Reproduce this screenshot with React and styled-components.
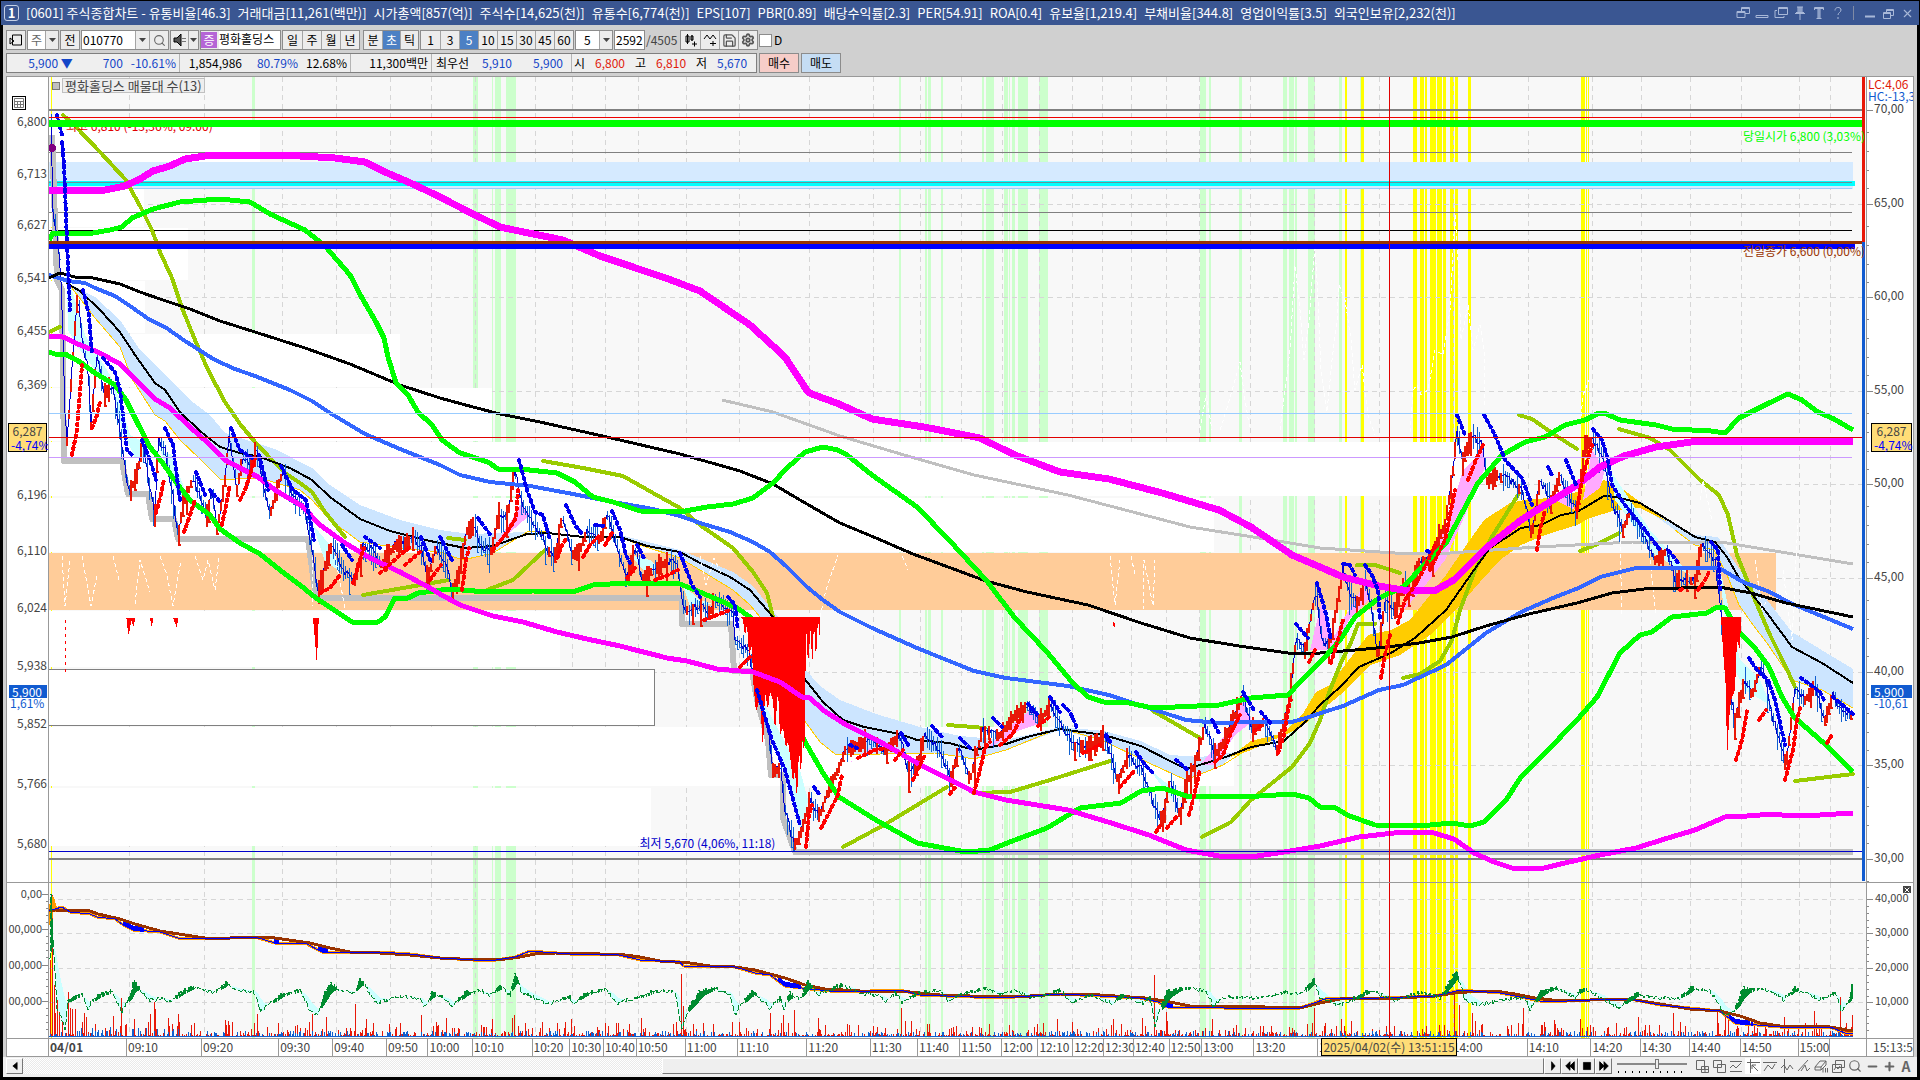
import React from 'react';
import styled, { createGlobalStyle } from 'styled-components';
import { Search, Save, Settings, Minus, Plus, X } from 'lucide-react';

// --- GLOBAL ---

const GlobalStyle = createGlobalStyle`
  * { box-sizing: border-box; }
  body { margin: 0; background: #000; }
  body, button, input, select {
    font-family: "Liberation Sans Narrow", "Noto Sans CJK KR", sans-serif;
    font-size: 12px;
    line-height: 16px;
  }
`;

// --- WINDOW ---

const Shell = styled.div`
  display: flex;
  flex-direction: column;
  height: 100vh;
  min-width: 1000px;
  padding: 1px 0 3px;
  background: #000;
  overflow: hidden;
`;

const TitleBar = styled.header`
  display: flex;
  align-items: center;
  justify-content: space-between;
  height: 24px;
  flex: none;
  margin: 0 1px;
  padding: 0 4px 0 3px;
  background: #3a5692;
  color: #fff;
`;

const TitleText = styled.h1`
  display: flex;
  align-items: center;
  gap: 7px;
  margin: 0;
  font-size: 13px;
  font-weight: 400;
  white-space: nowrap;
`;

const TitleBadge = styled.span`
  width: 15px;
  height: 16px;
  border: 1px solid #c6d0e6;
  border-radius: 3px;
  font-weight: 700;
  line-height: 14px;
  text-align: center;
`;

const TitleTools = styled.div`
  display: flex;
  align-items: center;
  gap: 4px;
`;

const TitleButton = styled.button`
  display: flex;
  align-items: center;
  justify-content: center;
  width: 15px;
  height: 18px;
  padding: 0;
  border: 0;
  background: none;
  color: #a9b8d8;
`;

const TitleDivider = styled.span`
  width: 1px;
  height: 14px;
  margin: 0 4px;
  background: #7f8aa5;
`;

const Body = styled.main`
  display: flex;
  flex-direction: column;
  flex: 1;
  min-height: 0;
  margin: 0 3px;
  padding: 5px 3px 0;
  background: #d0d0d0;
`;

// --- TOOLBAR ---

const ToolRow = styled.div`
  display: flex;
  align-items: stretch;
  gap: ${props => props.$gap || 1}px;
  height: 20px;
  flex: none;
  margin-bottom: 3px;
`;

const Group = styled.div`
  display: flex;
  border: 1px solid #8c8c8c;
  background: #ececec;
  margin-right: ${props => props.$after || 0}px;
`;

const ToolButton = styled.button`
  display: flex;
  align-items: center;
  justify-content: center;
  width: ${props => props.$w || 19}px;
  padding: 0;
  border: 0;
  border-left: 1px solid #a4a4a4;
  background: ${props => (props.$active ? '#4c80c4' : '#ececec')};
  color: ${props => (props.$active ? '#fff' : '#000')};
  white-space: nowrap;

  &:first-child { border-left: 0; }
`;

const Combo = styled.select`
  appearance: none;
  width: ${props => props.$w}px;
  padding: 0 0 0 ${props => props.$pad || 3}px;
  border: 0;
  border-radius: 0;
  background: #fff;
  color: ${props => props.$color || '#000'};
`;

const Field = styled.input`
  width: ${props => props.$w}px;
  padding: 0 1px;
  border: 0;
  background: #fff;
`;

const MarketTag = styled.span`
  width: 16px;
  margin: 1px 2px 1px 0;
  background: #b565d6;
  color: #fff;
  text-align: center;
`;

const StockName = styled.span`
  width: 61px;
  background: #fff;
  white-space: nowrap;
`;

const TotalCount = styled.span`
  width: 33px;
  line-height: 20px;
  color: #444;
`;

const CheckLabel = styled.label`
  display: flex;
  align-items: center;
  gap: 2px;

  input {
    appearance: none;
    width: 13px;
    height: 13px;
    margin: 0;
    border: 1px solid #8c8c8c;
    background: #fff;
  }
`;

const QuoteBox = styled.div`
  display: flex;
  width: 751px;
  border: 1px solid #7f7f7f;
  background: #efefef;
  line-height: 18px;
`;

const QuoteCell = styled.div`
  display: flex;
  justify-content: flex-end;
  gap: 8px;
  width: ${props => props.$w}px;
  padding-right: ${props => props.$pad || 3}px;
  border-right: 1px solid #b4b4b4;
  white-space: nowrap;

  &:last-child {
    justify-content: flex-start;
    gap: 10px;
    padding-left: 2px;
    border-right: 0;
  }
`;

const Value = styled.span`
  color: ${props => props.$color || '#000'};
  min-width: ${props => props.$w || 0}px;
  text-align: right;
`;

const OrderButton = styled.button`
  width: 40px;
  padding: 0;
  border: 1px solid #8c8c8c;
  background: ${props => props.$bg};
`;

// --- CHART FRAME ---

const ChartFrame = styled.section`
  display: grid;
  grid-template-columns: 42px minmax(0, 1fr) 47px;
  grid-template-rows: minmax(0, 805fr) minmax(0, 156fr) 18px;
  flex: 1;
  min-height: 0;
  border: 1px solid #999;
  background: #fff;
`;

const AxisCell = styled.div`
  position: relative;
  overflow: hidden;
  min-height: 0;
  border-top: ${props => (props.$lower ? '1px solid #999' : 0)};
  border-left: ${props => (props.$right ? '1px solid #999' : 0)};
  border-right: ${props => (props.$right ? 0 : '1px solid #999')};
`;

const PlotCell = styled.div`
  position: relative;
  overflow: hidden;
  min-height: 0;
  background: #f8f8f8;
  border-top: ${props => (props.$lower ? '1px solid #999' : 0)};
`;

const Canvas = styled.svg`
  display: block;
  width: 100%;
  height: 100%;

  text { font-size: ${props => props.$text || 12}px; fill: #444; }
  text.high { fill: #e00000; }
`;

const Legend = styled.div`
  position: absolute;
  top: 1px;
  left: 3px;
  display: flex;
  align-items: center;
  gap: 2px;
  font-size: 13px;

  &::before {
    content: "";
    width: 6px;
    height: 6px;
    border: 1px solid #777;
    background: #c0c0c0;
  }

  span {
    height: 15px;
    padding: 0 2px;
    border: 1px solid #c0c0c0;
    background: #eeeeee;
    color: #444;
    line-height: 13px;
  }
`;

const Note = styled.span`
  position: absolute;
  top: ${props => props.$top};
  left: ${props => props.$left || 'auto'};
  right: ${props => props.$right || 'auto'};
  color: ${props => props.$color};
  white-space: pre;
`;

const Tag = styled.div`
  position: absolute;
  top: ${props => props.$top};
  left: ${props => (props.$left || 4)}px;
  right: 1px;
  padding: 0 2px;
  border: 1px solid ${props => (props.$last ? '#115bd0' : '#000')};
  background: ${props => (props.$last ? '#115bd0' : '#ffdd77')};
  color: ${props => (props.$last ? '#fff' : '#444')};
  line-height: ${props => (props.$last ? 11 : 14)}px;
  text-align: ${props => (props.$last ? 'left' : 'center')};
  white-space: nowrap;

  em { display: block; font-style: normal; color: #00f; line-height: 13px; }
`;

const AxisNote = styled.span`
  position: absolute;
  top: ${props => props.$top};
  left: ${props => props.$left}px;
  color: ${props => props.$color};
  line-height: 12px;
  white-space: nowrap;
`;

const GridButton = styled.button`
  position: absolute;
  top: 19px;
  left: 5px;
  width: 14px;
  height: 14px;
  padding: 1px;
  border: 1px solid #000;
  background: #fff;

  svg { display: block; }
`;

const CloseButton = styled.button`
  position: absolute;
  top: 3px;
  right: 2px;
  display: flex;
  width: 8px;
  height: 7px;
  padding: 0;
  border: 0;
  background: #444;
  color: #fff;
`;

const TimeAxis = styled.div`
  position: relative;
  display: flex;
  grid-column: 2;
  border-top: 1px solid #999;
  color: #444;
`;

const TimeCorner = styled.div`
  border-top: 1px solid #999;
  border-left: ${props => (props.$right ? '1px solid #999' : 0)};
  border-right: ${props => (props.$right ? 0 : '1px solid #999')};
  padding-left: ${props => (props.$right ? 6 : 0)}px;
  color: #444;
  line-height: 15px;
  white-space: nowrap;
  overflow: hidden;
`;

const TimeCell = styled.span`
  flex: ${props => props.$span} 1 0;
  min-width: 0;
  padding-left: 1px;
  border-left: 1px solid #999;
  line-height: 15px;
  white-space: nowrap;

  &:first-child { border-left: 0; font-weight: 700; }
`;

const CursorTime = styled.span`
  position: absolute;
  top: -1px;
  right: 409px;
  width: 136px;
  height: 18px;
  border: 1px solid #000;
  background: #ffdd77;
  line-height: 15px;
  text-align: center;
  white-space: nowrap;
`;

// --- BOTTOM BAR ---

const BottomBar = styled.footer`
  display: flex;
  height: 20px;
  flex: none;
  margin: 0 -3px;
  padding: 1px 3px 3px;
  background: #efefef;
`;

const ScrollButton = styled.button`
  display: flex;
  align-items: center;
  justify-content: center;
  width: 17px;
  padding: 0;
  border: 1px solid;
  border-color: #fff #777 #777 #fff;
  background: #efefef;
`;

const ScrollTrack = styled.div`
  display: flex;
  flex: 1;
  justify-content: flex-end;
  background: repeating-conic-gradient(#fff 0 25%, #eaeaea 0 50%) 0 0 / 2px 2px;
`;

const ScrollThumb = styled.div`
  width: 58%;
  border: 1px solid;
  border-color: #fff #777 #777 #fff;
  background: #efefef;
`;

const Zoom = styled.input`
  appearance: none;
  width: 70px;
  height: 15px;
  margin: 0 7px 0 5px;
  background:
    linear-gradient(#888, #888) 0 5px / 100% 2px no-repeat,
    repeating-linear-gradient(90deg, #000 0 1px, transparent 1px 7px) 1px 13px / 100% 2px no-repeat;

  &::-webkit-slider-thumb {
    appearance: none;
    width: 4px;
    height: 10px;
    margin-top: -4px;
    border: 1px solid #777;
    background: #eee;
  }
`;

const DrawTools = styled.div`
  display: flex;
  align-items: center;
  gap: 1px;
`;

const DrawButton = styled.button`
  display: flex;
  align-items: center;
  justify-content: center;
  width: 16px;
  height: 16px;
  padding: 0;
  border: 0;
  background: ${props => (props.$on ? '#fff' : 'none')};
  color: #666;
  font-size: 14px;
  font-weight: 700;
`;

// --- CHART DATA ---

const GRID_X = [129, 204, 282, 336, 390, 431, 475, 535, 572, 605, 638, 686, 739, 809, 873, 920, 961, 1002, 1039, 1072, 1102, 1131, 1166, 1199, 1250, 1314, 1379, 1453, 1528, 1592, 1641, 1690, 1741, 1799, 1830];
const GRID_Y = [110, 204, 297, 391, 484, 578, 672, 765, 859];
const LOWER_GRID_Y = [899, 933, 968, 1002];

const TIMES = [
  [49, '04/01'], [128, '09:10'], [204, '09:20'], [282, '09:30'], [336, '09:40'], [390, '09:50'], [431, '10:00'],
  [475, '10:10'], [535, '10:20'], [572, '10:30'], [605, '10:40'], [637, '10:50'], [686, '11:00'], [738, '11:10'],
  [808, '11:20'], [872, '11:30'], [919, '11:40'], [961, '11:50'], [1002, '12:00'], [1038, '12:10'], [1072, '12:20'],
  [1102, '12:30'], [1131, '12:40'], [1166, '12:50'], [1198, '13:00'], [1250, '13:20'], [1314, '1'], [1451, '14:00'],
  [1528, '14:10'], [1592, '14:20'], [1641, '14:30'], [1690, '14:40'], [1741, '14:50'], [1799, '15:00'], [1830, ''],
];

const LEFT_TICKS = [['6,800', 122], ['6,713', 174], ['6,627', 225], ['6,541', 278], ['6,455', 331], ['6,369', 385], ['6,196', 495], ['6,110', 551], ['6,024', 608], ['5,938', 666], ['5,852', 724], ['5,766', 784], ['5,680', 844]];
const RIGHT_TICKS = [['70,00', 109], ['65,00', 203], ['60,00', 296], ['55,00', 390], ['50,00', 483], ['45,00', 577], ['40,00', 671], ['35,00', 764], ['30,00', 858]];

// [from, to] of the signal stripes
const GREEN_BANDS = [[252, 255], [473, 478], [492, 493], [495, 501], [506, 516], [899, 901], [925, 927], [928, 931], [941, 943], [982, 984], [986, 994], [1004, 1008], [1009, 1010], [1012, 1015], [1018, 1028], [1039, 1048], [1200, 1206], [1209, 1211], [1239, 1242], [1283, 1287], [1289, 1294], [1295, 1297], [1308, 1315], [1339, 1342], [1360, 1361]];
const YELLOW_BANDS = [[51, 52], [1345, 1347], [1361, 1364], [1413, 1417], [1420, 1424], [1425, 1427], [1430, 1436], [1437, 1442], [1443, 1446], [1450, 1454], [1455, 1458], [1468, 1471], [1581, 1585], [1586, 1587], [1588, 1589]];

// volume by price: top, bottom, right edge
const PROFILE = [[124, 174, 260], [175, 227, 144], [228, 280, 188], [281, 333, 145], [334, 387, 400], [388, 441, 492], [442, 496, 1479], [498, 552, 1214], [611, 667, 560], [727, 786, 1234], [788, 846, 651]];

const MAGENTA_UP = '49,190 85,191 105,190 125,186 140,179 153,171 170,166 185,159 205,156 225,155 265,155 300,156 335,158 365,162 385,172 415,185 440,197 471,213 500,227 514,230 563,240 600,256 630,266 671,280 700,291 725,308 750,325 785,357 808,392 812,394 839,404 872,419 924,427 980,438 1015,455 1060,472 1109,479 1162,493 1219,510 1251,527 1292,555 1320,567 1343,577 1379,586 1403,590 1434,591 1454,580 1486,548 1521,520 1545,505 1577,485 1600,467 1624,456 1656,447 1691,442 1727,441 1853,441';
const MAGENTA_LOW = '49,336 63,337 80,345 98,352 120,364 140,384 155,399 170,408 190,427 208,443 225,460 240,468 258,477 275,490 302,506 320,525 345,543 370,558 400,572 430,588 440,594 460,605 493,616 523,622 557,632 587,639 620,646 667,658 687,661 717,669 753,672 780,682 802,697 810,698 823,710 843,723 884,744 917,763 974,792 1006,800 1068,810 1108,822 1149,835 1186,850 1219,856 1251,857 1284,852 1320,846 1359,837 1403,832 1434,833 1454,839 1474,853 1494,862 1512,868 1540,869 1569,862 1600,855 1636,848 1668,838 1695,830 1725,817 1747,816 1774,814 1790,816 1820,815 1853,813';
const GREEN_UP = '49,240 53,233 93,233 110,230 122,227 132,218 153,209 180,202 220,199 250,202 270,214 305,230 325,246 350,275 362,298 376,322 384,338 388,357 396,383 408,395 418,412 432,425 442,440 460,453 488,462 498,469 520,469 557,473 575,482 593,497 613,502 640,511 680,512 707,507 733,504 753,498 773,483 787,468 805,452 823,447 838,450 847,455 872,475 917,507 949,540 986,580 1015,618 1047,652 1072,682 1088,697 1104,702 1129,703 1153,708 1219,705 1251,698 1288,695 1300,682 1324,658 1340,640 1355,617 1379,598 1403,587 1427,562 1446,543 1462,513 1478,483 1502,455 1525,442 1545,437 1565,425 1585,420 1599,413 1604,413 1620,420 1656,425 1672,429 1711,431 1725,433 1739,418 1767,404 1788,394 1802,400 1818,412 1834,419 1853,430';
const GREEN_LOW = '49,352 55,354 65,354 80,362 95,373 115,385 126,400 138,424 150,447 162,462 178,485 190,500 210,515 220,529 240,543 260,554 285,574 300,585 316,598 337,612 352,622 378,622 385,617 395,598 408,598 418,593 449,589 487,592 533,591 573,592 593,585 627,583 680,584 700,592 723,602 737,608 750,617 780,670 804,740 823,773 839,797 876,820 917,843 966,852 990,850 1015,840 1047,828 1080,808 1121,803 1141,791 1162,788 1190,797 1260,796 1292,794 1309,798 1320,807 1336,808 1347,815 1375,825 1419,826 1452,823 1470,826 1484,822 1506,800 1521,777 1545,753 1577,720 1597,697 1620,653 1640,635 1652,632 1672,617 1707,613 1717,607 1725,608 1739,632 1755,648 1769,667 1782,697 1794,717 1826,745 1853,772';
const BLACK_SLOW = '49,278 60,273 75,277 93,278 120,284 140,292 160,299 190,309 220,321 255,332 305,348 350,364 400,385 440,398 473,407 500,414 540,422 607,437 680,454 740,471 773,484 800,500 840,523 876,538 913,554 986,581 1027,592 1088,605 1141,623 1190,638 1239,646 1288,653 1320,653 1355,650 1387,647 1419,643 1452,637 1486,626 1529,614 1577,603 1612,593 1644,589 1719,587 1751,593 1786,603 1853,617';
const BLUE_MA = '49,275 68,281 85,283 95,288 115,296 130,306 150,320 165,327 185,341 215,360 235,369 255,376 290,390 312,401 330,413 365,434 400,449 440,465 460,475 490,482 530,486 573,494 613,502 653,509 680,516 700,523 730,532 753,542 770,552 787,567 807,587 823,600 840,612 872,628 917,648 974,671 1006,678 1068,686 1109,695 1149,708 1186,720 1219,723 1251,722 1292,722 1309,717 1324,712 1343,706 1379,690 1403,685 1446,665 1486,633 1521,612 1553,598 1581,587 1600,577 1636,568 1719,568 1743,582 1770,592 1790,603 1853,629';
const GRAY_MA = '722,400 773,412 840,436 904,455 974,475 1068,495 1190,527 1272,540 1320,548 1395,553 1450,553 1537,547 1632,542 1727,543 1763,549 1853,564';
const BLACK_FAST = '66,283 80,291 100,310 120,332 135,355 155,383 165,390 180,412 200,431 220,447 240,453 260,457 290,468 312,480 330,497 360,519 390,531 430,541 465,548 493,546 527,534 547,533 583,537 620,537 647,546 680,552 700,563 730,577 750,590 773,617 790,650 804,678 823,702 843,720 864,727 900,734 917,740 949,743 974,750 1006,744 1027,737 1060,729 1104,735 1141,746 1170,761 1186,769 1223,758 1251,747 1284,741 1304,723 1320,705 1340,687 1359,667 1391,653 1415,638 1446,610 1474,570 1490,548 1521,528 1541,525 1561,515 1577,512 1604,496 1616,497 1640,503 1668,520 1695,537 1715,542 1727,557 1739,578 1767,613 1792,647 1822,663 1853,683';
const SUPPORT = '52,135 57,280 62,290 64,461 122,461 128,494 148,494 152,519 174,519 178,539 308,539 316,598 682,598 682,624 731,624 734,671 752,671 757,700 768,740 771,775 783,775 783,818 790,838 795,852 1853,852';

const BLUE_CLOUDS = [
  '68,283 95,297 120,320 140,350 165,375 190,400 210,415 225,433 250,441 275,449 312,468 330,485 360,505 400,520 440,530 470,534 527,532 493,553 463,560 440,552 400,548 360,542 330,520 312,500 300,490 260,478 235,479 220,479 200,459 180,440 165,421 155,415 132,379 120,347 95,318 85,305',
  '620,535 680,550 700,558 733,572 753,586 778,617 760,617 750,605 733,590 710,576 680,558 640,545',
  '804,668 820,686 840,700 876,714 920,727 960,736 1006,740 1060,727 1104,731 1141,741 1170,755 1200,757 1235,752 1223,765 1186,780 1149,763 1104,741 1060,730 1006,750 974,759 935,753 880,754 835,754 820,742 804,720',
  '1640,505 1695,535 1718,537 1740,570 1767,600 1792,632 1853,669 1853,708 1822,690 1792,680 1767,643 1753,625 1739,605 1727,575 1714,550 1695,545 1675,530',
];
const GOLD_LINES = [
  '68,283 85,305 95,318 120,347 132,379 155,415 165,421 180,440 200,459 220,479 235,479 260,478 300,490 312,500 330,520 360,542 400,548 440,552 463,560 493,553 527,532 547,531',
  '620,537 640,545 680,558 710,576 733,590 750,605 760,617',
  '804,720 820,742 835,754 880,754 935,753 974,759 1006,750 1060,728 1104,741 1149,763 1186,780 1223,765 1251,747',
  '1675,530 1695,545 1714,550 1727,575 1739,605 1753,625 1767,643 1792,680 1822,690 1853,708',
];
const GOLD_CLOUD = '1230,757 1251,741 1284,733 1304,712 1316,692 1330,685 1345,665 1368,635 1391,630 1410,620 1446,575 1465,547 1484,520 1510,503 1530,499 1555,498 1577,492 1604,480 1620,487 1655,513 1668,522 1640,508 1616,510 1590,518 1577,525 1545,535 1521,545 1500,560 1480,582 1460,605 1430,635 1400,655 1370,665 1340,695 1300,728 1251,750';

const OLIVE = [
  '49,332 60,327',
  '63,115 77,128 100,152 125,179 140,206 152,230 160,252 172,278 182,308 195,340 208,370 225,402 240,424 255,442 270,458 285,473 300,483 312,492 325,512 345,537',
  '543,461 583,468 623,476 653,493 680,508 700,525 733,548 753,572 767,593 773,617',
  '363,595 449,580', '448,538 465,540', '487,590 513,580 545,550', '843,847 884,825 947,787', '974,793 1010,792 1050,780 1110,761',
  '948,725 985,728', '1153,711 1200,738', '1202,837 1231,822 1251,800 1292,767 1310,743 1320,720 1330,690 1340,665 1352,640 1358,624 1375,624',
  '1403,678 1420,674 1440,661 1452,640 1460,610 1475,570 1490,540 1518,495', '1519,415 1532,419 1555,435 1577,449', '1580,551 1600,543 1619,533',
  '1619,429 1650,438 1670,450 1700,480 1719,495 1728,515 1737,555 1755,600 1770,635 1785,665 1795,687', '1795,781 1853,774', '1357,565 1375,565 1400,573',
];

const PRICE = '51,117 53,215 58,240 62,300 66,455 70,400 74,340 78,290 82,340 88,370 91,425 97,355 104,395 112,385 120,430 126,475 130,493 138,470 143,440 150,490 155,515 158,440 165,450 172,490 178,535 183,505 193,478 200,495 207,515 212,490 217,530 225,480 229,435 237,490 243,455 250,465 257,450 262,480 270,515 277,490 283,470 293,495 305,510 314,560 318,595 325,565 332,545 343,570 355,580 363,545 372,550 382,565 395,545 405,543 415,537 422,550 428,580 436,545 448,570 452,595 460,565 467,530 475,525 480,545 492,550 498,515 508,515 514,470 516,475 520,500 530,520 542,535 547,550 556,555 562,515 572,555 580,550 587,530 600,540 607,515 617,545 627,578 636,548 642,580 652,570 670,560 677,565 682,600 687,610 700,605 710,612 715,600 733,610 735,640 748,650 757,690 768,730 773,770 781,770 785,810 790,830 795,845 800,835 810,800 820,815 828,790 840,765 845,750 870,740 885,750 900,735 908,770 917,765 925,735 940,750 952,780 958,745 970,780 982,730 1000,735 1015,715 1027,705 1040,720 1050,705 1062,725 1075,745 1090,748 1105,735 1118,780 1128,755 1142,770 1152,800 1162,820 1170,780 1180,815 1186,785 1196,760 1205,725 1215,755 1225,740 1243,695 1252,730 1265,720 1277,750 1290,695 1296,640 1305,650 1316,590 1322,640 1330,645 1343,570 1350,595 1358,605 1365,580 1372,610 1378,660 1385,600 1395,610 1405,580 1410,595 1420,560 1432,560 1437,540 1445,525 1452,480 1457,430 1462,460 1466,450 1472,435 1482,445 1487,480 1497,475 1510,480 1522,490 1532,535 1540,480 1552,500 1560,475 1568,495 1577,510 1585,445 1593,440 1603,455 1611,500 1623,530 1630,510 1640,530 1655,560 1667,550 1675,580 1695,580 1702,545 1715,560 1722,620 1728,680 1735,720 1745,680 1752,695 1762,660 1770,710 1780,740 1786,765 1795,690 1805,700 1815,685 1825,720 1833,695 1840,710 1851,715 1852,695';

const SAR_DOWN = ['57,115 62,135', '62,142 64,165 66,215 68,265 70,310', '83,290 89,315 92,355', '103,358 115,372 120,390 124,425 127,450 132,455', '142,440 150,460 156,480', '165,428 173,445 176,470 180,500', '196,472 205,495', '210,490 220,502', '231,428 240,450 252,458', '259,455 268,490', '281,466 293,490 306,500 314,540', '342,545 352,560', '365,537 380,548', '421,537 430,560', '440,537 452,560', '478,518 492,537', '519,460 527,490 535,512 543,515 550,540', '566,505 575,525 583,535', '595,525 605,526', '612,511 620,530 626,555 630,563', '637,545 645,560', '680,553 692,585 700,597', '728,597 735,605 738,630', '757,690 772,740 785,770 800,825', '814,787 820,795', '850,745 857,748', '901,733 910,748', '932,726 943,738', '960,738 972,750', '993,718 1002,727', '1028,704 1037,714', '1050,697 1060,712', '1063,705 1070,712 1077,728', '1106,735 1112,745', '1136,752 1145,765 1155,775', '1176,760 1188,770', '1212,720 1220,735', '1243,692 1255,712', '1261,712 1272,725', '1296,624 1308,638', '1317,583 1325,610 1331,640', '1343,564 1350,565 1355,575', '1365,565 1372,575 1378,590 1380,620', '1427,551 1432,553', '1457,415 1466,437', '1484,415 1495,435 1505,460 1522,478 1532,505', '1548,467 1553,477', '1566,460 1576,485', '1593,429 1602,440 1608,460 1612,485 1625,505 1645,530 1660,550', '1669,551 1680,565', '1711,542 1718,550 1720,590', '1749,658 1757,670 1768,680 1775,700 1785,745', '1801,678 1820,692 1825,702', '1833,697 1853,714'];
const SAR_UP = ['72,455 77,430 80,390 82,365', '92,428 97,415 100,402', '156,513 160,498 164,480', '184,532 190,515 195,500', '222,525 227,500 230,485', '240,500 245,490 250,475 256,455', '320,593 330,588 340,575', '353,583 360,560 364,548', '380,573 400,555 410,547', '405,565 420,552', '430,580 441,565', '462,590 466,560 469,548', '493,550 505,535 516,518 518,490', '557,558 562,545 567,538', '583,557 590,545 600,535', '605,545 612,533', '627,578 635,568', '655,580 668,575 678,570', '704,620 730,610', '740,667 752,655', '806,847 809,815 812,805', '821,828 828,815 838,795 842,775', '858,758 875,750 885,748', '895,760 903,750', '913,780 920,765 925,755', '950,794 957,785', '974,793 980,770 985,748 990,742', '1000,745 1012,735 1020,720', '1038,726 1048,718', '1083,753 1100,745', '1120,787 1135,770', '1156,832 1160,826', '1167,828 1178,815', '1189,815 1193,800 1200,770', '1215,762 1223,755 1230,735 1240,715', '1254,731 1262,725', '1278,753 1284,735 1290,700', '1309,662 1315,650', '1331,663 1338,640 1343,620', '1381,678 1386,650 1390,635', '1398,623 1405,600 1415,585 1425,567 1435,545', '1430,570 1445,540 1455,490', '1468,480 1475,462 1483,445', '1537,550 1540,530 1545,510', '1577,510 1583,475 1592,445', '1680,590 1685,588', '1698,590 1705,580 1710,570', '1736,760 1742,740 1747,710', '1759,720 1766,710', '1785,780 1793,750 1797,720 1800,708', '1827,743 1832,735'];

const CYAN_CLOUDS = ['66,260 72,290 85,335 95,350 110,375 120,400 130,435 140,440 150,455 135,458 122,430 112,385 95,370 80,350 68,330', '160,450 172,455 185,490 180,500', '313,525 330,545 342,572 325,562', '683,585 700,600 712,604 690,606', '757,690 800,770 808,800 802,835 780,760', '630,555 650,560 660,570 645,572', '1150,770 1175,790 1172,800', '1610,470 1650,530 1690,575 1655,555 1615,500', '1718,560 1740,660 1760,680 1785,740 1770,705 1745,690 1730,660'];
const PINK_CLOUDS = ['495,545 515,515 520,505 530,515 515,528', '840,770 870,748 890,748 860,755', '985,750 1015,722 1030,710 1045,722 1020,730', '1200,765 1225,735 1243,698 1252,722 1235,735 1215,765', '1310,650 1322,600 1332,640 1343,620 1355,600 1365,582 1368,600 1350,618 1335,650', '1402,612 1425,565 1445,530 1463,470 1483,450 1486,465 1465,515 1445,560 1420,592', '1555,500 1565,485 1575,510', '1583,500 1592,450 1605,470 1600,488'];

const RED_CLOUDS = [
  '741,617 820,617 820,640 818,618 816,660 814,622 812,672 811,624 808,665 806,624 805,720 804,765 803,730 801,775 799,750 797,800 795,770 793,782 790,755 788,742 786,748 783,728 780,735 778,690 775,732 773,700 770,692 768,710 765,692 763,750 760,698 756,712 753,680 752,645 749,655 747,624 745,636 743,620',
  '1721,617 1741,617 1740,650 1737,640 1735,690 1731,700 1729,720 1727,760 1726,690 1723,650',
  '125,618 135,618 134,627 131,620 130,630 128,635 127,620', '150,618 153,618 152,628', '173,618 178,618 177,628', '313,618 319,618 318,630 317,666 315,640', '1114,618 1115,628 1113,626',
];

const WHITE_TRACES = ['1200,430 1206,395 1212,430', '1220,430 1228,405 1240,362 1245,400 1250,430', '1280,430 1285,390 1290,350 1295,265 1300,310 1304,360 1309,320 1315,245 1318,300 1321,370 1327,412 1332,360 1337,320 1339,285 1345,300 1351,340 1355,390 1362,365 1368,415 1375,435', '1410,432 1413,390 1417,385 1421,395 1428,390 1435,350 1443,355 1450,310 1455,215 1458,260 1461,340 1468,305 1473,350 1480,325 1484,350 1485,405', '62,556 65,606 70,560', '82,556 91,606 97,575', '113,556 119,580', '135,604 140,560 150,592', '160,556 167,575 173,606 181,560', '195,556 203,580 208,560 215,590 219,558', '335,556 345,608', '312,556 313,606', '700,556 706,585 714,558 722,575', '820,617 826,590 838,555', '902,556 908,570', '1110,556 1115,605 1120,560', '1131,556 1135,575', '1143,610 1144,560 1153,606 1155,560', '1580,430 1583,395 1589,380', '1620,540 1622,615', '1650,560 1656,615', '1700,500 1703,480 1712,520', '1755,560 1762,610 1772,590', '1783,570 1792,640 1798,520'];

const BROWN = '49,911 55,910 90,911 98,914 120,919 135,924 160,931 185,935 205,938 230,938 255,937 275,938 310,943 330,948 350,952 380,953 410,955 440,958 480,960 505,959 520,957 535,954 555,953 600,954 625,955 640,957 660,961 690,963 710,966 735,967 755,970 785,978 805,985 825,989 860,991 900,991 940,995 1000,997 1030,996 1060,994 1100,995 1145,998 1170,1002 1190,1006 1230,1006 1300,1008 1320,1003 1340,999 1370,998 1400,998 1435,996 1455,993 1480,991 1495,991 1515,994 1535,998 1560,1001 1590,1000 1630,999 1660,1004 1690,1009 1720,1011 1740,1016 1760,1023 1780,1026 1830,1027 1853,1031';
const BLUE_LINE = '49,911 55,909 62,907 70,912 90,914 97,917 115,919 122,924 133,930 160,932 178,938 230,938 255,937 275,943 305,943 322,952 380,952 410,954 440,958 490,961 515,957 530,951 570,954 615,954 640,960 680,962 683,966 735,967 755,973 770,975 785,986 810,989 840,992 900,990 920,995 1000,998 1060,994 1140,998 1158,1002 1167,1007 1280,1009 1300,1008 1325,999 1380,998 1435,996 1460,990 1500,993 1525,998 1545,1002 1590,1000 1630,999 1660,1005 1720,1011 1735,1023 1745,1024 1780,1027 1830,1027 1845,1033 1853,1034';
const STRENGTH = '50,960 51,896 53,940 55,970 57,1010 62,1020 65,1032 68,1000 75,997 82,995 88,1010 93,998 110,990 118,1003 122,1012 130,995 134,980 142,992 150,1000 160,998 170,1002 180,992 192,987 215,992 227,982 235,990 255,992 260,1012 270,1003 280,995 300,990 310,1010 317,1015 325,992 330,982 340,990 355,993 360,978 368,990 377,1003 400,996 420,998 424,1008 432,993 445,998 452,1006 465,992 480,990 490,995 500,985 510,995 515,973 522,993 535,998 545,1004 570,997 573,1005 585,993 605,988 618,1005 625,1000 640,997 655,990 675,992 682,1030 690,1005 700,990 715,988 730,995 735,1015 740,1005 752,991 770,1008 780,998 784,1010 790,992 800,1000 808,980 818,995 830,990 841,984 860,993 880,996 885,1003 895,992 902,1003 915,993 940,990 948,1001 960,994 980,990 984,987 1000,995 1015,990 1030,997 1050,995 1058,988 1072,1002 1090,995 1113,1003 1120,995 1143,1003 1150,997 1155,1025 1167,990 1190,988 1205,990 1213,1005 1225,997 1260,998 1285,992 1300,994 1314,980 1320,998 1340,1005 1370,990 1395,1000 1420,992 1440,998 1456,970 1465,1000 1480,1005 1500,1000 1525,998 1530,1010 1540,992 1555,987 1575,998 1582,987 1600,997 1620,1008 1635,993 1650,998 1680,998 1690,988 1710,990 1725,1015 1735,1010 1742,988 1770,990 1783,1000 1795,988 1810,995 1820,1000 1835,992 1842,1012 1850,998 1852,985';
const VOLUME_SPIKES = { 50: 960, 52: 895, 54: 985, 57: 1000, 68: 992, 72: 1020, 84: 1013, 113: 1016, 121: 998, 134: 1019, 154: 1002, 178: 1014, 225: 1020, 257: 1014, 312: 1014, 326: 1017, 355: 1004, 366: 1019, 421: 1015, 446: 1018, 492: 1019, 512: 1018, 514: 1015, 571: 1019, 641: 1018, 681: 974, 683: 1006, 732: 1022, 770: 1013, 783: 1015, 794: 1010, 818: 1018, 901: 1008, 1057: 1019, 1072: 1022, 1113: 1019, 1142: 1018, 1154: 975, 1166: 1012, 1212: 1019, 1314: 1008, 1341: 1019, 1454: 990, 1459: 1005, 1472: 1013, 1523: 1008, 1554: 1020, 1580: 1019, 1638: 1017, 1673: 1013, 1717: 1010, 1725: 1015, 1728: 1013, 1784: 1017, 1814: 1011, 1840: 997, 1852: 1015 };

// --- HELPERS ---

const parse = str => str.split(' ').map(p => p.split(',').map(Number));

const noise = n => {
  const v = Math.sin(n * 12.9898) * 43758.5453;
  return v - Math.floor(v);
};

const valueAt = (pts, x) => {
  let i = 1;
  while (i < pts.length - 1 && pts[i][0] < x) i++;
  const [x0, y0] = pts[i - 1];
  const [x1, y1] = pts[i];
  return y0 + ((y1 - y0) * (x - x0)) / (x1 - x0 || 1);
};

const buildCandles = () => {
  const pts = parse(PRICE);
  let up = '';
  let down = '';
  let close = '';
  for (let x = 51; x <= 1852; x += 2) {
    const y = Math.round(valueAt(pts, x));
    const slope = valueAt(pts, x + 2) - y;
    const body = 3 + Math.round(Math.pow(noise(x), 2) * 10);
    const wick = noise(x + 7) > 0.88 ? 12 : 1;
    const low = Math.min(y + body + wick, 850);
    const seg = `M${x} ${y - body}V${low}h${noise(x + 3) > 0.6 ? 2 : 0}`;
    if (slope + (noise(x + 5) - 0.5) * 3 < 0) up += seg;
    else down += seg;
    close += `${close ? 'L' : 'M'}${x} ${Math.round(y + (noise(x + 11) - 0.5) * 8)}`;
  }
  return { up, down, close };
};

const buildStrength = () => {
  const pts = parse(STRENGTH);
  let avg = 960;
  let above = '';
  let below = '';
  let line = '';
  for (let x = 50; x <= 1852; x++) {
    const y = Math.round(valueAt(pts, x) + (noise(x) - 0.5) * 4);
    avg += (y - avg) * 0.12;
    const a = Math.round(avg);
    if (y < a - 2) above += `M${x} ${y}V${a}`;
    else if (y > a) below += `M${x} ${a}V${y}`;
    line += `${line ? 'L' : 'M'}${x} ${y}`;
  }
  return { above, below, line };
};

const buildVolume = () => {
  let red = '';
  let blue = '';
  for (let x = 50; x <= 1852; x++) {
    const n = noise(x * 1.7);
    const early = x < 180 ? 2 : 1;
    red += n > 0.5 ? `M${x} 1037v-${Math.round(2 + Math.pow(n, 8) * 14 * early)}` : '';
    if (noise(x + 40) > 0.75) blue += `M${x} 1037v-${Math.round(2 + noise(x + 9) * 4 * early)}`;
    if (VOLUME_SPIKES[x]) red += `M${x} 1037V${VOLUME_SPIKES[x]}`;
  }
  return { red, blue };
};

// fill where the fast average runs under the slow one
const buildGap = () => {
  const slow = parse(BROWN);
  const fast = parse(BLUE_LINE);
  let gap = '';
  for (let x = 60; x <= 1852; x++) {
    const a = Math.round(valueAt(slow, x));
    const b = Math.round(valueAt(fast, x));
    if (b > a + 4) gap += `M${x} ${b - 4}V${b + 1}`;
  }
  return gap;
};

const candles = buildCandles();
const strength = buildStrength();
const volume = buildVolume();
const gap = buildGap();

// --- CHART PARTS ---

const Line = ({ points, color, width, ...rest }) => (
  <polyline points={points} fill="none" stroke={color} strokeWidth={width} strokeLinejoin="round" {...rest} />
);

const HLine = ({ y, color, width = 1, to = 1863 }) => <rect x="49" y={y} width={to - 49} height={width} fill={color} />;

const Bands = ({ top, height }) => (
  <g>
    {GREEN_BANDS.map(([a, b]) => <rect key={a} x={a} y={top} width={b - a} height={height} fill="#ccffcc" />)}
    {YELLOW_BANDS.map(([a, b]) => <rect key={a} x={a} y={top} width={b - a} height={height} fill="#ffff00" />)}
  </g>
);

const Grid = ({ top, bottom, rows }) => (
  <g stroke="#d6d6d6" strokeDasharray="5 4">
    {GRID_X.map(x => <line key={x} x1={x + 0.5} x2={x + 0.5} y1={top} y2={bottom} />)}
    {rows.map(y => <line key={y} x1="49" x2="1863" y1={y + 0.5} y2={y + 0.5} />)}
  </g>
);

const PricePlot = () => (
  <Canvas viewBox="49 77 1817 805" preserveAspectRatio="none" shapeRendering="crispEdges">
    <Bands top={77} height={805} />
    <Grid top={77} bottom={882} rows={GRID_Y} />
    {PROFILE.map(([top, bottom, right]) => <rect key={top} x="49" y={top} width={right - 49} height={bottom - top} fill="#fff" />)}
    <rect x="49" y="553" width="1727" height="57" fill="#ffcc99" />
    <rect x="48.5" y="669.5" width="606" height="56" fill="#fff" stroke="#808080" />

    {/* daily levels */}
    <rect x="49" y="162" width="1804" height="27" fill="#d5eaff" />
    <HLine y={181} width={5} color="#00ffff" to={1855} />
    <HLine y={182} color="#6a8f99" to={1852} />
    <HLine y={188} color="#99ccff" to={1852} />
    <HLine y={109} width={2} color="#808080" />
    <HLine y={152} color="#808080" to={1852} />
    <HLine y={212} color="#808080" to={1852} />
    <HLine y={230} color="#000" to={1852} />
    <HLine y={858} width={2} color="#808080" />

    <Line points={SUPPORT} color="#c0c0c0" width={6} />
    {BLUE_CLOUDS.map(p => <polygon key={p} points={p} fill="#cce5ff" />)}
    <polygon points={GOLD_CLOUD} fill="#ffcc00" />
    {GOLD_LINES.map(p => <Line key={p} points={p} color="#ffcc00" width={1} />)}
    {CYAN_CLOUDS.map(p => <polygon key={p} points={p} fill="#ccffff" />)}
    {PINK_CLOUDS.map(p => <polygon key={p} points={p} fill="#ffaaff" />)}
    {OLIVE.map(p => <Line key={p} points={p} color="#99cc00" width={4} strokeLinecap="round" />)}
    <Line points={GRAY_MA} color="#c0c0c0" width={3} />
    <Line points={BLACK_FAST} color="#000" width={2} />
    <path d={candles.down} fill="none" stroke="#1060d0" />
    <path d={candles.close} fill="none" stroke="#0000cc" />
    <path d={candles.up} fill="none" stroke="#e81808" strokeWidth="2" />
    {WHITE_TRACES.map(p => <Line key={p} points={p} color="#fff" width={1} strokeDasharray="4 3" />)}
    <line x1="65.5" x2="65.5" y1="620" y2="674" stroke="#f00" strokeDasharray="3 4" />
    <Line points={BLUE_MA} color="#3366ff" width={4} />
    <Line points={BLACK_SLOW} color="#000" width={3} />
    <Line points={GREEN_UP} color="#00ff00" width={5} />
    <Line points={GREEN_LOW} color="#00ff00" width={5} />
    {RED_CLOUDS.map(p => <polygon key={p} points={p} fill="#f00" />)}
    <Line points={MAGENTA_UP} color="#ff00ff" width={7} />
    <Line points={MAGENTA_LOW} color="#ff00ff" width={5} />
    {SAR_UP.map(p => <Line key={p} points={p} color="#f00" width={4} strokeLinecap="round" strokeDasharray="2 4" />)}
    {SAR_DOWN.map(p => <Line key={p} points={p} color="#0000ee" width={4} strokeLinecap="round" strokeDasharray="2 4" />)}
    <circle cx="52" cy="148" r="4" fill="#800080" />

    <HLine y={413} color="#99ccff" to={1852} />
    <HLine y={457} color="#cc99ff" to={1852} />
    <HLine y={851} color="#0000cc" />
    <HLine y={241} width={3} color="#993300" />
    <HLine y={244} width={5} color="#0000ff" to={1855} />
    <HLine y={117} color="#e00" />
    <text className="high" x="66" y="131">최고 6,810 (-13,36%, 09:00)</text>
    <HLine y={120} width={7} color="#00ff00" />
    <HLine y={437} color="#e00000" />
    <rect x="1389" y="77" width="1" height="805" fill="#e00000" />
    <rect x="1862" y="77" width="3" height="165" fill="#e81808" />
    <rect x="1862" y="242" width="3" height="639" fill="#115bd0" />
  </Canvas>
);

const VolumePlot = () => (
  <Canvas viewBox="49 883 1817 155" preserveAspectRatio="none" shapeRendering="crispEdges">
    <Bands top={883} height={155} />
    <Grid top={883} bottom={1037} rows={LOWER_GRID_Y} />
    <path d={strength.below} stroke="#ccffff" />
    <path d={volume.red} stroke="#e81808" />
    <path d={volume.blue} stroke="#1060d0" />
    <rect x="49" y="1036" width="1804" height="1" fill="#1060d0" />
    <Line points="50,925 52,898 54,905 57,911" color="#ff9900" width={4} />
    <Line points={BLUE_LINE} color="#ff9900" width={3} />
    <path d={gap} stroke="#0000ff" />
    <Line points={BROWN} color="#993300" width={3} />
    <Line points={BLUE_LINE} color="#0000ff" width={1} />
    <path d={strength.above} stroke="#008c30" />
    <path d={strength.line} fill="none" stroke="#008c30" strokeDasharray="6 2" />
    <rect x="1389" y="883" width="1" height="155" fill="#e00000" />
  </Canvas>
);

const LeftAxis = () => (
  <Canvas viewBox="7 77 41 805" preserveAspectRatio="none">
    {LEFT_TICKS.map(([label, y]) => <text key={label} x="47" y={y + 4} textAnchor="end">{label}</text>)}
  </Canvas>
);

const RightAxis = () => (
  <Canvas viewBox="1867 77 46 805" preserveAspectRatio="none" shapeRendering="crispEdges">
    {RIGHT_TICKS.map(([label, y]) => (
      <g key={label}>
        <rect x="1867" y={y + 1} width="6" height="1" fill="#888" />
        {[19, 38, 57, 75].map(d => <rect key={d} x="1867" y={y + d + 4} width="2" height="1" fill="#888" />)}
        <text x="1874" y={y + 4}>{label}</text>
      </g>
    ))}
  </Canvas>
);

const LowerLeftAxis = () => (
  <Canvas viewBox="7 883 41 155" preserveAspectRatio="none" shapeRendering="crispEdges" $text={11}>
    {[['0,00', 894], ['00,000', 929], ['00,000', 965], ['00,000', 1001]].map(([label, y]) => (
      <g key={y}>
        <text x="42" y={y + 4} textAnchor="end">{label}</text>
        <rect x="42" y={y} width="6" height="1" fill="#888" />
        {[7, 14, 21, 28].map(d => <rect key={d} x="46" y={y + d} width="2" height="1" fill="#888" />)}
      </g>
    ))}
  </Canvas>
);

const LowerRightAxis = () => (
  <Canvas viewBox="1867 883 46 155" preserveAspectRatio="none" shapeRendering="crispEdges" $text={11}>
    {[['40,000', 899], ['30,000', 933], ['20,000', 968], ['10,000', 1002]].map(([label, y]) => (
      <g key={label}>
        <text x="1875" y={y + 3}>{label}</text>
        <rect x="1867" y={y} width="6" height="1" fill="#888" />
        {[7, 14, 21, 28].map(d => <rect key={d} x="1867" y={y + d} width="2" height="1" fill="#888" />)}
      </g>
    ))}
  </Canvas>
);

// --- ICONS ---

const Icon = ({ d, size = 14, fill = 'none', width = 1 }) => (
  <svg width={size} height={size} viewBox="0 0 14 14" fill={fill} stroke="currentColor" strokeWidth={width} aria-hidden="true">
    <path d={d} />
  </svg>
);

const Arrow = () => (
  <svg width="7" height="4" viewBox="0 0 7 4" aria-hidden="true"><path d="M0 0h7L3.5 4z" fill="#444" /></svg>
);

const TITLE_ICONS = [
  ['Detach', 'M1 5.500h8v6H1zM5.500 5V1.500h8v6H9M1 6.500h8M6 2.500h7'],
  ['Hide', 'M1 9.500h12v2H1z'],
  ['Duplicate', 'M4.500 1.500h9v7h-9zM5 2.500h8M3 4.500H1v7h9V10'],
  ['Pin', 'M4 1h6M5 1v5M9 1v5M6 1v6M7 1v6M8 1v6M2 7.500h10M3 6.500h8M7 8v6'],
  ['Text', 'M2.500 4V1.500h9V4M6 2v10M7 2v10M8 2v10M4.500 12.500h5M3 2.500h8'],
  ['Help', 'M4 4.500c0-4 6-4 6-.5 0 2.500-3 2.500-3 5M7 11v2'],
];

const DRAW_ICONS = [
  ['Add frame', 'M1.500 1.500h8v9h-8zM6.500 7.500h7v6h-7zM10 8v5M7 10.500h6'],
  ['Frames', 'M1.500 1.500h8v7h-8zM5.500 5.500h8v8h-8z'],
  ['Pattern', 'M1 2.500h12M1 12.500h12M1 9l3-3 3 3 5-5'],
  ['Cross line', 'M1 3.500h13M4.500 0v14M6 6l6 6M6 10V6h4'],
  ['Trend', 'M0 3.500h14M1 12l4-6 4 4 3-5'],
  ['Vertical', 'M4.500 0v14M1 9l3-3 3 5 3-5 3 4'],
  ['Channel', 'M1 12L11 1M4 12l4-6 2 6 3-3'],
  ['Erase all', 'M1 8l5-6h6l-5 6zM1 8v3h6V8M7 11l5-5V2M9 13.500V9M11.500 13.500V9M13.500 13.500V9'],
  ['Overlay', 'M4.500 1.500h9v7h-9zM1.500 5.500h9v8h-9zM3 11l2-3 2 2 2-3'],
];

const TITLE_PARTS = ['[0601] 주식종합차트 - 유통비율[46.3]', '거래대금[11,261(백만)]', '시가총액[857(억)]', '주식수[14,625(천)]', '유통수[6,774(천)]', 'EPS[107]', 'PBR[0.89]', '배당수익률[2.3]', 'PER[54.91]', 'ROA[0.4]', '유보율[1,219.4]', '부채비율[344.8]', '영업이익률[3.5]', '외국인보유[2,232(천)]'];
const PERIODS = ['일', '주', '월', '년'];
const UNITS = ['분', '초', '틱'];
const STEPS = ['1', '3', '5', '10', '15', '30', '45', '60'];
const BLUE = '#1446c8';
const RED = '#e01a0a';

// --- APP ---

const Toolbar = () => (
  <>
    <ToolRow>
      <Group><ToolButton $w={18} aria-label="Panel"><Icon d="M3.500 2v10h9V2zM1 5l4 3-4 3z" /></ToolButton></Group>
      <Group>
        <Combo $w={17} $color="#666" aria-label="종류" defaultValue="주"><option>주</option></Combo>
        <ToolButton $w={13} aria-label="열기"><Arrow /></ToolButton>
      </Group>
      <Group><ToolButton $w={18}>전</ToolButton></Group>
      <Group>
        <Field $w={53} aria-label="종목코드" defaultValue="010770" />
        <ToolButton $w={14} aria-label="목록"><Arrow /></ToolButton>
        <ToolButton $w={19} aria-label="검색"><Search size={13} color="#666" /></ToolButton>
      </Group>
      <Group>
        <ToolButton $w={17} aria-label="소리"><Icon d="M1 5h3l4-4v12L4 9H1zM10 5v1M10 8v1M12 5v1M12 8v1" fill="#555" /></ToolButton>
        <ToolButton $w={10} aria-label="소리 설정"><Arrow /></ToolButton>
      </Group>
      <Group><MarketTag>증</MarketTag><StockName>평화홀딩스</StockName></Group>
      <Group $after={2}>{PERIODS.map(p => <ToolButton key={p}>{p}</ToolButton>)}</Group>
      <Group>{UNITS.map(u => <ToolButton key={u} $w={18} $active={u === '초'}>{u}</ToolButton>)}</Group>
      <Group>{STEPS.map(s => <ToolButton key={s} $active={s === '5'}>{s}</ToolButton>)}</Group>
      <Group>
        <Combo $w={23} $pad={8} aria-label="간격" defaultValue="5"><option>5</option></Combo>
        <ToolButton $w={13} aria-label="간격 목록"><Arrow /></ToolButton>
      </Group>
      <Group><Field $w={29} aria-label="개수" defaultValue="2592" /></Group>
      <TotalCount>/4505</TotalCount>
      <Group>
        <ToolButton aria-label="캔들"><Icon d="M2 3h3v6H2zM3.500 1v10M8 2v6M7 3h2v4H7zM8 11h5M10.500 8.500v5" /></ToolButton>
        <ToolButton aria-label="지표"><Icon d="M1 6l3-4 3 4 3-4 3 4M7 10.500h6M10 8v5" /></ToolButton>
        <ToolButton aria-label="저장"><Save size={15} strokeWidth={2} color="#555" /></ToolButton>
        <ToolButton aria-label="설정"><Settings size={14} strokeWidth={3} color="#555" /></ToolButton>
      </Group>
      <CheckLabel><input type="checkbox" />D</CheckLabel>
    </ToolRow>
    <ToolRow $gap={2}>
      <QuoteBox>
        <QuoteCell $w={173}>
          <Value $color={BLUE}>5,900 ▼</Value>
          <Value $w={42} $color={BLUE}>700</Value>
          <Value $color={BLUE}>-10.61%</Value>
        </QuoteCell>
        <QuoteCell $w={171}><Value>1,854,986</Value><Value $w={48} $color={BLUE}>80.79%</Value><Value>12.68%</Value></QuoteCell>
        <QuoteCell $w={81}><Value>11,300백만</Value></QuoteCell>
        <QuoteCell $w={140} $pad={8}><Value>최우선</Value><Value $w={35} $color={BLUE}>5,910</Value><Value $w={43} $color={BLUE}>5,900</Value></QuoteCell>
        <QuoteCell $w={184}>
          <Value>시</Value><Value $color={RED}>6,800</Value>
          <Value>고</Value><Value $color={RED}>6,810</Value>
          <Value>저</Value><Value $color={BLUE}>5,670</Value>
        </QuoteCell>
      </QuoteBox>
      <OrderButton $bg="#f6cdc8">매수</OrderButton>
      <OrderButton $bg="#c5ddf4">매도</OrderButton>
    </ToolRow>
  </>
);

const App = () => (
  <Shell>
    <GlobalStyle />
    <TitleBar>
      <TitleText>
        <TitleBadge>1</TitleBadge>
        {TITLE_PARTS.map(part => <span key={part}>{part}</span>)}
      </TitleText>
      <TitleTools>
        {TITLE_ICONS.map(([label, d]) => <TitleButton key={label} aria-label={label}><Icon d={d} /></TitleButton>)}
        <TitleDivider />
        <TitleButton aria-label="Minimize"><Icon d="M2 10.500h10" width={2} /></TitleButton>
        <TitleButton aria-label="Restore"><Icon d="M1.500 6.500h7v6h-7zM1.500 7.500h7M4.500 6V3.500h7v6H9M4.500 4.500h7" /></TitleButton>
        <TitleButton aria-label="Close"><X size={13} strokeWidth={2} /></TitleButton>
      </TitleTools>
    </TitleBar>

    <Body>
      <Toolbar />

      <ChartFrame>
        <AxisCell>
          <LeftAxis />
          <GridButton aria-label="표"><svg width="10" height="10" viewBox="0 0 10 10" fill="none" stroke="#777"><path d="M.5.5h9v9h-9zM.5 3.500h9M.5 6.500h9M3.500 3v6M6.500 3v6" /></svg></GridButton>
          <Tag $top="43%" $left={1}>6,287<em>-4,74%</em></Tag>
          <Tag $top="75.5%" $left={2} $last>5,900</Tag>
          <AxisNote $top="77%" $left={3} $color="#115bd0">1,61%</AxisNote>
        </AxisCell>
        <PlotCell>
          <PricePlot />
          <Legend><span>평화홀딩스 매물대 수(13)</span></Legend>
          <Note $top="6.3%" $right="1px" $color="#00ff00">당일시가 6,800 (3,03%)</Note>
          <Note $top="20.6%" $right="1px" $color="#993300">전일종가 6,600 (0,00%)</Note>
          <Note $top="94.2%" $left="32.5%" $color="#0000cc">최저 5,670 (4,06%, 11:18)</Note>
        </PlotCell>
        <AxisCell $right>
          <RightAxis />
          <AxisNote $top="1px" $left={1} $color={RED}>LC:4,06</AxisNote>
          <AxisNote $top="13px" $left={1} $color="#115bd0">HC:-13,36</AxisNote>
          <Tag $top="43%">6,287<em>-4,74%</em></Tag>
          <Tag $top="75.5%" $last>5,900</Tag>
          <AxisNote $top="77%" $left={7} $color="#115bd0">-10,61</AxisNote>
        </AxisCell>

        <AxisCell $lower><LowerLeftAxis /></AxisCell>
        <PlotCell $lower><VolumePlot /></PlotCell>
        <AxisCell $lower $right>
          <LowerRightAxis />
          <CloseButton aria-label="닫기"><X size={8} strokeWidth={3} /></CloseButton>
        </AxisCell>

        <TimeCorner />
        <TimeAxis>
          {TIMES.map(([x, label], i) => (
            <TimeCell key={x} $span={(i < TIMES.length - 1 ? TIMES[i + 1][0] : 1866) - x}>{label}</TimeCell>
          ))}
          <CursorTime>2025/04/02(수) 13:51:15</CursorTime>
        </TimeAxis>
        <TimeCorner $right>15:13:5</TimeCorner>
      </ChartFrame>

      <BottomBar>
        <ScrollButton aria-label="Scroll left"><Icon size={10} d="M10 2v10L4 7z" fill="#000" /></ScrollButton>
        <ScrollTrack><ScrollThumb /></ScrollTrack>
        <ScrollButton aria-label="Play"><Icon size={10} d="M5 1v12l5-6z" fill="#000" /></ScrollButton>
        <ScrollButton aria-label="Rewind"><Icon size={12} d="M7 2v10L2 7zM12 2v10L7 7z" fill="#000" /></ScrollButton>
        <ScrollButton aria-label="Stop"><Icon size={10} d="M2 2h10v10H2z" fill="#000" /></ScrollButton>
        <ScrollButton aria-label="Forward"><Icon size={12} d="M2 2v10l5-5zM7 2v10l5-5z" fill="#000" /></ScrollButton>
        <Zoom type="range" aria-label="Zoom" min="0" max="100" defaultValue="58" />
        <DrawTools>
          {DRAW_ICONS.map(([label, d]) => <DrawButton key={label} aria-label={label} $on={label === 'Cross line'}><Icon d={d} /></DrawButton>)}
          <DrawButton aria-label="Magnify"><Search size={14} /></DrawButton>
          <DrawButton aria-label="Zoom out"><Minus size={13} strokeWidth={4} /></DrawButton>
          <DrawButton aria-label="Zoom in"><Plus size={13} strokeWidth={4} /></DrawButton>
          <DrawButton>A</DrawButton>
        </DrawTools>
      </BottomBar>
    </Body>
  </Shell>
);

export default App;
